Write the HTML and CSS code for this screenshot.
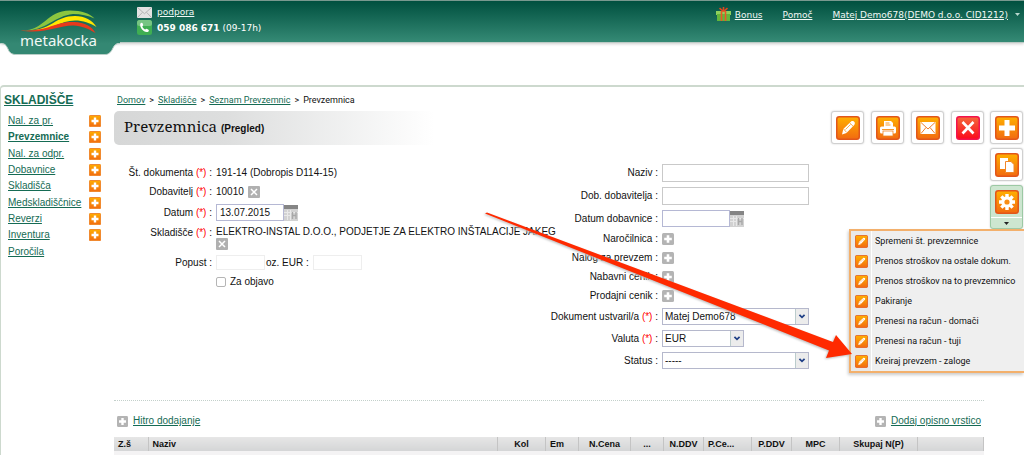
FILE: index.html
```html
<!DOCTYPE html>
<html lang="sl">
<head>
<meta charset="utf-8">
<title>Prevzemnica</title>
<link rel="stylesheet" href="styles.css">
</head>
<body>
<svg class="defs" aria-hidden="true">
  <defs>
    <linearGradient id="orange" x1="0" y1="0" x2="0" y2="1"><stop offset="0" stop-color="#ffb000"/><stop offset="1" stop-color="#f26a10"/></linearGradient>
    <linearGradient id="red" x1="0" y1="0" x2="0" y2="1"><stop offset="0" stop-color="#f4683c"/><stop offset="1" stop-color="#fb0a1c"/></linearGradient>
    <linearGradient id="tab" x1="0" y1="0" x2="0" y2="1"><stop offset="0" stop-color="#00503f"/><stop offset=".8" stop-color="#348873"/><stop offset="1" stop-color="#348873"/></linearGradient>
    <symbol id="add" viewBox="0 0 12 12"><rect width="12" height="12" rx="1.5" fill="url(#orange)"/><rect x=".5" y=".5" width="11" height="11" rx="1" fill="none" stroke="#f08a30"/><path d="M6 2.5v7M2.5 6h7" stroke="#fff" stroke-width="2.4"/></symbol>
    <symbol id="add-gray" viewBox="0 0 12 12"><rect width="12" height="12" rx="1.5" fill="#b4b4b4"/><path d="M6 2.2v7.6M2.2 6h7.6" stroke="#fff" stroke-width="2.6"/></symbol>
    <symbol id="remove" viewBox="0 0 12 12"><rect width="12" height="12" rx="1" fill="#b0b0b0"/><path d="M3 3l6 6M9 3l-6 6" stroke="#fff" stroke-width="1.5"/></symbol>
    <symbol id="tile" viewBox="0 0 24 24"><rect x=".75" y=".75" width="22.5" height="22.5" rx="2.5" fill="url(#orange)" stroke="#e2561a" stroke-width="1.5"/></symbol>
    <symbol id="pencil" viewBox="0 0 24 24"><path d="M6 18.500l1.300-5.500 7.800-7.600c1-.9 2.800-.5 3.400.7.500 1 .4 2-.3 2.800l-7.700 8z" fill="#fff"/><path d="M7.600 13l3 3.400M13.600 6.800l3.500 3.400M9.500 13.500l5-5" stroke="#f79a2a" stroke-width=".8" fill="none"/></symbol>
    <symbol id="calendar" viewBox="0 0 14 16"><rect width="14" height="16" fill="#d2d2d2"/><rect width="14" height="4" fill="#858585"/><path d="M0 7.500h14M0 10.500h7M3.500 5v10M6.500 5v10" stroke="#e9e9e9"/><path d="M8.500 7v7M12 7v7M8.500 10.500h3.500" stroke="#a8a8a8" stroke-width="1.400"/></symbol>
  </defs>
</svg>

<header class="top">
  <a class="logo" href="#">
    <svg class="logo-shape" viewBox="0 0 120 56" aria-hidden="true">
      <path d="M0 42C5 42 6 44 8 48C9.500 52 12 53.500 16 53.500H105C109 53.500 111 51 113 47C114.500 44 116 42 120 42V0H0z" fill="url(#tab)"/>
      <path d="M0 42.500C5 42.500 6 44 8 48C9.500 52 12 53.500 16 53.500H105C109 53.500 111 51 113 47C114.500 44 116 42.500 120 42.500" fill="none" stroke="#b9cec7"/>
      <path d="M22 29.500C45 29.500 46 10 70 9.500C82 9.500 90 12.500 94.500 17.500C88 14.500 81 13 73 13C55 14.500 46 30.500 22 29.500z" fill="#8cc63f"/>
      <path d="M30 29.500C52 28.500 55 15 75 15C85 15 92 19 96.500 26C90 22 83 19.500 75 19.500C60 19.500 50 30.500 30 29.500z" fill="#ffe600"/>
      <path d="M20 29.500C48 31 54 20.500 74 21C85 21.500 92 25.500 95.500 32C88 27.500 82 25 73 24.500C57 24.500 46 33.500 20 29.500z" fill="#e8391c"/>
    </svg>
    <span class="logo-name">metakocka</span>
  </a>
  <address class="contact">
    <svg viewBox="0 0 15 11" class="mail-icon" aria-hidden="true"><rect width="15" height="11" rx="1" fill="#e3e3e3"/><path d="M.7.7l6.800 6 6.800-6M.7 10.300l4.800-5M14.300 10.300l-4.800-5" fill="none" stroke="#b5b5b5"/></svg>
    <a href="#">podpora</a>
    <svg viewBox="0 0 15 15" class="phone-icon" aria-hidden="true"><rect width="15" height="15" rx="2.500" fill="#3fae52"/><rect width="15" height="6" rx="2.500" fill="#77c583"/><path d="M3.300 3.800c.8-1.400 2-1.300 2.500 0l.4 1.300c.1.500-.8.900-.8 1.400.3 1.200 1.500 2.500 2.700 2.900.6.100 1-.7 1.500-.6l1.500.6c1.200.6 1 1.900-.4 2.500C7.300 13.200 2.200 7.500 3.300 3.800z" fill="#fff"/></svg>
    <span><b>059 086 671</b> (09-17h)</span>
  </address>
  <nav class="user-nav">
    <a class="bonus" href="#"><svg viewBox="0 0 15 15" class="gift" aria-hidden="true"><rect x="0" y="4" width="15" height="4" fill="#8ed05c"/><rect x="1" y="7" width="13" height="7" fill="#62b63b"/><path d="M5.500 4v10M9.500 4v10" stroke="#e8562a" stroke-width="1.600"/><path d="M7.500 4.500L3.500 1.200M7.500 4.500l4-3.300M7.500 4.500V0" stroke="#e0471f" stroke-width="1.600"/></svg><span>Bonus</span></a>
    <a href="#">Pomoč</a>
    <a class="account" href="#"><span>Matej Demo678(DEMO d.o.o. CID1212)</span><svg viewBox="0 0 5 3" class="caret" aria-hidden="true"><path d="M0 0h5L2.500 3z" fill="#b9d8cf"/></svg></a>
  </nav>
</header>

<div class="panel">
  <aside class="side">
    <h2><a href="#">SKLADIŠČE</a></h2>
    <ul>
      <li><a href="#">Nal. za pr.</a><button aria-label="Dodaj nalog za prevzem"><svg><use href="#add"/></svg></button></li>
      <li><a class="current" href="#">Prevzemnice</a><button aria-label="Dodaj prevzemnico"><svg><use href="#add"/></svg></button></li>
      <li><a href="#">Nal. za odpr.</a><button aria-label="Dodaj nalog za odpremo"><svg><use href="#add"/></svg></button></li>
      <li><a href="#">Dobavnice</a><button aria-label="Dodaj dobavnico"><svg><use href="#add"/></svg></button></li>
      <li><a href="#">Skladišča</a><button aria-label="Dodaj skladišče"><svg><use href="#add"/></svg></button></li>
      <li><a href="#">Medskladiščnice</a><button aria-label="Dodaj medskladiščnico"><svg><use href="#add"/></svg></button></li>
      <li><a href="#">Reverzi</a><button aria-label="Dodaj reverz"><svg><use href="#add"/></svg></button></li>
      <li><a href="#">Inventura</a><button aria-label="Dodaj inventuro"><svg><use href="#add"/></svg></button></li>
      <li><a href="#">Poročila</a></li>
    </ul>
  </aside>

  <main class="main">
    <nav class="crumbs"><a href="#">Domov</a><span>&gt;</span><a href="#">Skladišče</a><span>&gt;</span><a href="#">Seznam Prevzemnic</a><span>&gt;</span><span>Prevzemnica</span></nav>
    <div class="title-row">
      <h1>Prevzemnica <small>(Pregled)</small></h1>
      <div class="tools">
        <button class="tool" aria-label="Uredi"><svg viewBox="0 0 24 24"><use href="#tile"/><use href="#pencil"/></svg></button>
        <button class="tool" aria-label="Natisni"><svg viewBox="0 0 24 24"><use href="#tile"/><path d="M8 5h7l2 2v4H8z" fill="#fff"/><path d="M9.500 7h4M9.500 9h5" stroke="#f79a2a"/><rect x="4" y="10.500" width="16" height="7" rx="1.500" fill="#fff"/><path d="M6 13.500h12" stroke="#f79a2a"/><rect x="7" y="15" width="10" height="5" fill="#fff" stroke="#f0862a" stroke-width=".8"/></svg></button>
        <button class="tool" aria-label="Pošlji"><svg viewBox="0 0 24 24"><use href="#tile"/><rect x="4.500" y="6" width="15" height="12" fill="#fff"/><path d="M5 6.500l7 6.500 7-6.500M5 17.500l5-6M19 17.500l-5-6" fill="none" stroke="#f08030"/></svg></button>
        <button class="tool" aria-label="Izbriši"><svg viewBox="0 0 24 24"><rect x=".75" y=".75" width="22.500" height="22.500" rx="2.500" fill="url(#red)" stroke="#f3134c" stroke-width="1.500"/><path d="M6.500 6l11 11.500M17.500 6l-11 11.500" stroke="#fff" stroke-width="2.600"/></svg></button>
      </div>
    </div>

    <form class="form">
      <div class="fields left">
        <span class="label">Št. dokumenta <i>(*)</i> :</span>
        <div>191-14 (Dobropis D114-15)</div>
        <span class="label">Dobavitelj <i>(*)</i> :</span>
        <div class="line">10010 <button type="button" class="mini" aria-label="Odstrani dobavitelja"><svg><use href="#remove"/></svg></button></div>
        <label class="label" for="datum">Datum <i>(*)</i> :</label>
        <div class="date"><input id="datum" type="text" value="13.07.2015"><button type="button" aria-label="Koledar"><svg><use href="#calendar"/></svg></button></div>
        <span class="label top-label">Skladišče <i>(*)</i> :</span>
        <div class="store"><span>ELEKTRO-INSTAL D.O.O., PODJETJE ZA ELEKTRO INŠTALACIJE JAKEG</span><button type="button" class="mini" aria-label="Odstrani skladišče"><svg><use href="#remove"/></svg></button></div>
        <label class="label" for="popust">Popust :</label>
        <div class="discount"><input id="popust" type="text"><label for="eur">oz. EUR :</label><input id="eur" type="text"></div>
        <span></span>
        <div class="line"><input id="objava" type="checkbox"><label for="objava">Za objavo</label></div>
      </div>

      <div class="fields right">
        <label class="label" for="naziv">Naziv :</label>
        <input class="text" id="naziv" type="text">
        <label class="label" for="dob">Dob. dobavitelja :</label>
        <input class="text" id="dob" type="text">
        <label class="label" for="datumdob">Datum dobavnice :</label>
        <div class="date"><input id="datumdob" type="text"><button type="button" aria-label="Koledar"><svg><use href="#calendar"/></svg></button></div>
        <span class="label">Naročilnica :</span>
        <button type="button" class="mini" aria-label="Dodaj naročilnico"><svg><use href="#add-gray"/></svg></button>
        <span class="label">Nalog za prevzem :</span>
        <button type="button" class="mini" aria-label="Dodaj nalog"><svg><use href="#add-gray"/></svg></button>
        <span class="label">Nabavni cenik :</span>
        <button type="button" class="mini" aria-label="Dodaj nabavni cenik"><svg><use href="#add-gray"/></svg></button>
        <span class="label">Prodajni cenik :</span>
        <button type="button" class="mini" aria-label="Dodaj prodajni cenik"><svg><use href="#add-gray"/></svg></button>
        <label class="label" for="ustvaril">Dokument ustvaril/a <i>(*)</i> :</label>
        <div class="select"><select id="ustvaril"><option>Matej Demo678</option></select><svg viewBox="0 0 14 16"><path d="M4 6l3 3 3-3" /></svg></div>
        <label class="label" for="valuta">Valuta <i>(*)</i> :</label>
        <div class="select short"><select id="valuta"><option>EUR</option></select><svg viewBox="0 0 14 16"><path d="M4 6l3 3 3-3" /></svg></div>
        <label class="label" for="status">Status :</label>
        <div class="select"><select id="status"><option>-----</option></select><svg viewBox="0 0 14 16"><path d="M4 6l3 3 3-3" /></svg></div>
      </div>
    </form>

    <section class="items">
      <div class="item-links">
        <a href="#"><svg><use href="#add-gray"/></svg><span>Hitro dodajanje</span></a>
        <a href="#"><svg><use href="#add-gray"/></svg><span>Dodaj opisno vrstico</span></a>
      </div>
      <table>
        <colgroup><col class="w34"><col><col class="w48"><col class="w33"><col class="w52"><col class="w33"><col class="w40"><col class="w48"><col class="w40"><col class="w48"><col class="w78"><col class="w66"></colgroup>
        <thead><tr><th class="start">Z.š</th><th class="start">Naziv</th><th>Kol</th><th class="start">Em</th><th>N.Cena</th><th>...</th><th>N.DDV</th><th class="start">P.Ce...</th><th>P.DDV</th><th>MPC</th><th>Skupaj N(P)</th><th></th></tr></thead>
      </table>
    </section>
  </main>

  <div class="rail">
    <button class="tool" aria-label="Dodaj"><svg viewBox="0 0 24 24"><use href="#tile"/><path d="M12 4v16M4 12h16" stroke="#fff" stroke-width="5"/></svg></button>
    <button class="tool" aria-label="Kopiraj"><svg viewBox="0 0 24 24"><use href="#tile"/><rect x="5" y="5" width="8" height="11" fill="#fff"/><path d="M10.500 8.500h5.500l3 3v8h-8.500z" fill="#fff" stroke="#f0862a"/></svg></button>
    <div class="more">
      <button class="tool open" aria-label="Dejanja"><svg viewBox="0 0 24 24"><use href="#tile"/><g fill="#fff"><circle cx="12" cy="12" r="5.800"/><path d="M10.300 4h3.400v16h-3.400zM4 10.300h16v3.400H4z"/><path transform="rotate(45 12 12)" d="M10.300 4h3.400v16h-3.400zM4 10.300h16v3.400H4z"/></g><circle cx="12" cy="12" r="2.600" fill="#f98d16"/></svg><span class="drop"><svg viewBox="0 0 5 3"><path d="M0 0h5L2.500 3z" fill="#222"/></svg></span></button>
      <menu class="menu">
        <li><button><svg viewBox="0 0 24 24"><use href="#tile"/><use href="#pencil"/></svg><span>Spremeni št. prevzemnice</span></button></li>
        <li><button><svg viewBox="0 0 24 24"><use href="#tile"/><use href="#pencil"/></svg><span>Prenos stroškov na ostale dokum.</span></button></li>
        <li><button><svg viewBox="0 0 24 24"><use href="#tile"/><use href="#pencil"/></svg><span>Prenos stroškov na to prevzemnico</span></button></li>
        <li><button><svg viewBox="0 0 24 24"><use href="#tile"/><use href="#pencil"/></svg><span>Pakiranje</span></button></li>
        <li><button><svg viewBox="0 0 24 24"><use href="#tile"/><use href="#pencil"/></svg><span>Prenesi na račun - domači</span></button></li>
        <li><button><svg viewBox="0 0 24 24"><use href="#tile"/><use href="#pencil"/></svg><span>Prenesi na račun - tuji</span></button></li>
        <li><button><svg viewBox="0 0 24 24"><use href="#tile"/><use href="#pencil"/></svg><span>Kreiraj prevzem - zaloge</span></button></li>
      </menu>
    </div>
    <svg class="arrow" viewBox="0 0 372 152" aria-hidden="true"><path d="M2 2.500L4 1.500L350 131L353 124L369 143L343 147L346 139.500z" fill="#ff2a00"/></svg>
  </div>
</div>
</body>
</html>
```

FILE: styles.css
```css
* { box-sizing: border-box; }
body { margin: 0; background: #fff; color: #111; font: 10px/14px "Liberation Sans", Arial, sans-serif; overflow-x: hidden; }
a { color: #156b54; }
button { border: 0; padding: 0; background: none; font: inherit; color: inherit; cursor: pointer; display: flex; }
input, select { font: inherit; color: inherit; margin: 0; }
svg { display: block; }
.defs { position: absolute; width: 0; height: 0; }

.top { display: flex; align-items: flex-start; height: 43px; background: linear-gradient(#00503f, #358a75); border-top: 1px solid #78998f; border-bottom: 1px solid #bccac5; box-shadow: 0 1px 3px #ccc; font: 9px/14px "DejaVu Sans", Verdana, sans-serif; }
.top a { color: #f1f8f5; }
.logo { position: relative; width: 120px; flex: none; text-decoration: none; }
.logo-shape { width: 100%; }
.logo-name { position: absolute; left: 20px; top: 29px; font: 15px/20px "Noto Sans", sans-serif; }
.contact { display: grid; grid-template-columns: 15px auto; column-gap: 5px; row-gap: 1px; align-items: center; margin: 4px 0 0 17px; color: #fff; font-style: normal; }
.mail-icon { width: 15px; height: 11px; }
.phone-icon { width: 15px; height: 15px; }
.user-nav { display: flex; gap: 20px; margin: 6px 4px 0 auto; align-items: center; }
.bonus, .account { display: flex; align-items: center; gap: 4px; text-decoration: none; }
.bonus span, .account span { text-decoration: underline; }
.gift { width: 15px; height: 15px; }
.caret { width: 5px; height: 3px; margin-left: 3px; }

.panel { display: flex; margin-top: 42px; border-top: 2px solid #cdd9ce; border-left: 1px solid #cdd9ce; border-radius: 4px 0 0 0; position: relative; }
.side { width: 101px; flex: none; padding: 5px 0 0 3px; }
.side h2 { margin: 0; font-size: 12px; line-height: 17px; }
.side ul { list-style: none; margin: 4px 0 0; padding: 0 0 0 4px; display: grid; grid-auto-rows: 1fr; min-height: 147px; }
.side li { display: flex; justify-content: space-between; align-items: center; padding-right: 1px; }
.side .current { font-weight: bold; }
.side li svg { width: 12px; height: 12px; }

.main { flex: 1; min-width: 0; margin-left: 12px; padding-top: 6px; }
.crumbs { display: flex; gap: 4px; padding-left: 3px; font: 9px/14px Roboto, Tahoma, sans-serif; }
.title-row { display: flex; align-items: flex-start; justify-content: space-between; padding-top: 4px; }
h1 { margin: 0; width: 320px; height: 34px; padding: 4px 0 0 10px; border-radius: 5px 0 0 5px; background: linear-gradient(90deg, #d6d7d7, #dddede 35%, #fff); font: 15px/22px "Noto Serif", Georgia, "DejaVu Serif", serif; }
h1 small { font: bold 10px/14px "Liberation Sans", Arial, sans-serif; }
.tools { display: flex; gap: 7px; }
.tool { width: 33px; height: 33px; padding: 4px; border: 1px solid #d0d0d0; border-radius: 3px; background: #fff; box-shadow: 0 0 2px #ccc; justify-content: center; }
.tool > svg { width: 24px; height: 24px; flex: none; }

.form { display: grid; grid-template-columns: 1fr 1fr; padding-top: 19px; align-items: start; }
.fields { display: grid; column-gap: 4px; align-items: center; white-space: nowrap; }
.left { grid-template-columns: 98px minmax(0, 1fr); row-gap: 5px; padding-top: 2px; }
.right { grid-template-columns: 109px auto; row-gap: 5px; justify-items: start; }
.label { justify-self: end; }
.label i { color: #f00; font-style: normal; }
.top-label { align-self: start; }
.line { display: flex; align-items: center; gap: 4px; }
.mini, .mini svg { width: 12px; height: 12px; }
.mini { margin: 1px 0; }
.date { display: flex; align-items: center; height: 17px; }
.date input { width: 68px; height: 17px; border: 1px solid #b5b8d4; padding: 0 3px; }
.date svg { width: 14px; height: 16px; }
.store { line-height: 12px; }
.store .mini { margin: 0; }
.discount { display: flex; align-items: center; }
.discount input { width: 49px; height: 15px; border: 1px solid #eee; margin-right: 1px; }
.discount label { margin-right: 4px; }
input[type="checkbox"] { appearance: none; width: 10px; height: 10px; border: 1px solid #b5b5b5; border-radius: 2px; background: #fff; }
.text { width: 147px; height: 18px; border: 1px solid #c9c9c9; padding: 0 3px; }
.select { position: relative; width: 147px; }
.select.short { width: 82px; }
.select select { display: block; appearance: none; width: 100%; height: 17px; border: 1px solid #b5b8cc; border-radius: 0; background: #fff; padding: 0 16px 0 2px; }
.select svg { position: absolute; right: 1px; top: 1px; width: 13px; height: 15px; background: #ececec; border-left: 1px solid #bcc; pointer-events: none; }
.select path { fill: none; stroke: #1f3f86; stroke-width: 2; }

.items { margin-top: 31px; border-top: 1px dotted #c3d0cb; padding-top: 13px; }
.item-links { display: flex; justify-content: space-between; padding: 0 3px; }
.item-links a { display: flex; align-items: center; gap: 5px; text-decoration: none; }
.item-links span { text-decoration: underline; }
.item-links svg { width: 11px; height: 11px; }
table { width: 100%; table-layout: fixed; border-collapse: collapse; margin-top: 9px; border-bottom: 4px solid #f4f3f4; }
th { height: 16px; padding: 0 4px; background: linear-gradient(#e6e6e6, #d4d5d6); border-right: 1px solid #c4c4c4; border-bottom: 1px solid #c0c0c0; font-size: 9px; line-height: 14px; white-space: nowrap; }
.start { text-align: left; }
.w33 { width: 33px; } .w34 { width: 34px; } .w40 { width: 40px; } .w48 { width: 48px; } .w52 { width: 52px; } .w66 { width: 66px; } .w78 { width: 78px; }

.rail { flex: none; width: 40px; padding: 24px 1px 0 6px; display: flex; flex-direction: column; gap: 4px; }
.more { position: relative; }
.tool.open { height: auto; flex-direction: column; align-items: center; padding: 4px 0 0; background: #cde6d0; border-color: #9cc9a4; }
.drop { width: 100%; display: flex; justify-content: center; margin-top: 3px; padding: 4px 0 3px; border-top: 1px solid #fff; }
.drop svg { width: 5px; height: 3px; }
.menu { position: absolute; right: -1px; top: 100%; width: 175px; list-style: none; margin: 0; padding: 0; border: 2px solid #f3b06c; border-right: 0; background: linear-gradient(90deg, #e9e9e9 20px, #fff 20px, #fff 21px, #efefef 21px); box-shadow: -1px 2px 3px #ccc; font: 9px/14px Roboto, Tahoma, sans-serif; }
.menu button { align-items: center; width: 100%; padding: 3px 4px; gap: 7px; white-space: nowrap; }
.menu svg { width: 13px; height: 13px; flex: none; }
.arrow { position: absolute; right: 169px; top: 124px; width: 372px; height: 152px; pointer-events: none; filter: drop-shadow(-1px 1px 1px #bbb); }
```
